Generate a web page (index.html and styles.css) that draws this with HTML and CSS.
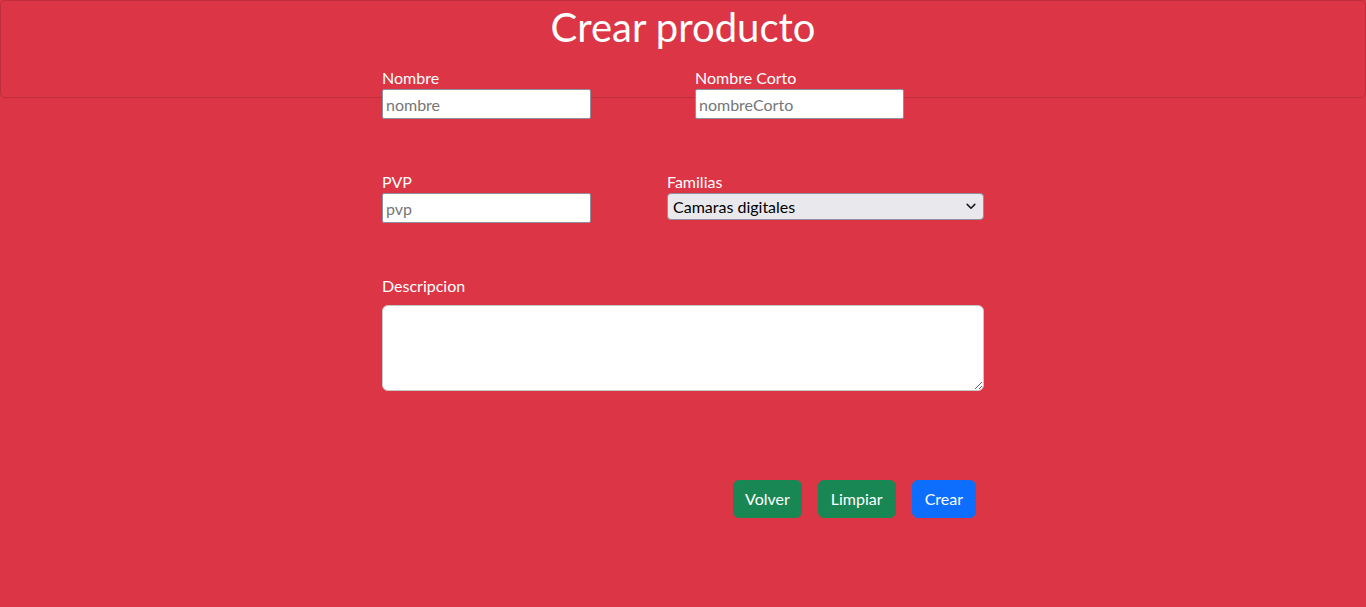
FILE: index.html
```html
<!DOCTYPE html>
<html lang="es">
<head>
<meta charset="utf-8">
<title>Crear producto</title>
<link rel="stylesheet" href="styles.css">
</head>
<body>
<div class="page">
  <div class="banner"></div>
  <h1 class="title">Crear producto</h1>
  <form class="form">
    <div class="row row-1">
      <div class="field">
        <label class="label" for="nombre">Nombre</label>
        <input class="input" id="nombre" type="text" placeholder="nombre">
      </div>
      <div class="field">
        <label class="label" for="nombreCorto">Nombre Corto</label>
        <input class="input" id="nombreCorto" type="text" placeholder="nombreCorto">
      </div>
    </div>
    <div class="row row-2">
      <div class="field">
        <label class="label" for="pvp">PVP</label>
        <input class="input" id="pvp" type="text" placeholder="pvp">
      </div>
      <div class="field field-select">
        <label class="label" for="familia">Familias</label>
        <div class="select-wrap">
          <select class="select" id="familia">
            <option>Camaras digitales</option>
          </select>
          <svg class="chevron" width="10" height="7" viewBox="0 0 10 7"><path d="M1.2 1.4 5 5.2 8.8 1.4" fill="none" stroke="#1b1b1b" stroke-width="1.6" stroke-linecap="round" stroke-linejoin="round"/></svg>
        </div>
      </div>
    </div>
    <div class="row row-3">
      <div class="field field-full">
        <label class="label label-desc" for="descripcion">Descripcion</label>
        <textarea class="textarea" id="descripcion"></textarea>
      </div>
    </div>
    <div class="actions">
      <button type="button" class="btn btn-green btn-volver">Volver</button>
      <button type="reset" class="btn btn-green">Limpiar</button>
      <button type="submit" class="btn btn-blue">Crear</button>
    </div>
  </form>
</div>
</body>
</html>
```

FILE: styles.css
```css
* { box-sizing: border-box; }

html, body {
  margin: 0;
  padding: 0;
  height: 100%;
}

body {
  background: #dc3545;
  color: #ffffff;
  font-family: Lato, "Noto Sans", sans-serif;
  font-size: 16px;
}

.page {
  position: relative;
  min-height: 100%;
  padding-top: 3px;
}

.banner {
  position: absolute;
  top: 0;
  left: 0;
  right: 0;
  height: 98px;
  border: 1px solid rgba(0, 0, 0, 0.13);
  border-radius: 5px;
}

.title {
  position: relative;
  margin: 0;
  font-size: 40px;
  font-weight: 400;
  line-height: 48px;
  text-align: center;
}

.form {
  position: relative;
  width: 602px;
  margin: 14px auto 0;
}

.row {
  display: flex;
  align-items: flex-start;
}

.row-1 { gap: 104px; }
.row-2 { gap: 76px; margin-top: 50px; }
.row-3 { margin-top: 50px; }

.field {
  display: flex;
  flex-direction: column;
}

.field-full { width: 100%; }

.label {
  display: block;
  padding-top: 2px;
  line-height: 22px;
}

.label-desc { margin-bottom: 8px; }

.input {
  width: 209px;
  height: 30px;
  padding: 0 3px;
  border: 1px solid #8f8f9d;
  border-radius: 2px;
  background: #ffffff;
  font-family: inherit;
  font-size: 16px;
  color: #000;
  outline: none;
}

.input::placeholder { color: #767676; }

.select-wrap {
  position: relative;
  width: 317px;
}

.select {
  appearance: none;
  -webkit-appearance: none;
  display: block;
  width: 100%;
  height: 27px;
  padding: 0 24px 0 5px;
  border: 1px solid #8f8f9d;
  border-radius: 4px;
  background: #e9e9ed;
  color: #000;
  font-family: inherit;
  font-size: 16px;
  line-height: 25px;
}

.chevron {
  position: absolute;
  right: 8px;
  top: 10px;
  pointer-events: none;
}

.textarea {
  display: block;
  width: 100%;
  height: 86px;
  border: 1px solid #c8c8cc;
  border-radius: 6px;
  background: #fff;
  font-family: inherit;
  font-size: 16px;
  resize: both;
  outline: none;
}

.actions {
  display: flex;
  justify-content: flex-end;
  gap: 16px;
  margin-top: 89px;
  padding-right: 8px;
}

.btn {
  height: 38px;
  padding: 0 12px;
  border: 1px solid transparent;
  border-radius: 6px;
  color: #fff;
  font-family: inherit;
  font-size: 16px;
  line-height: 24px;
  cursor: pointer;
}

.btn-volver { padding: 0 11px; }

.btn-green { background: #198754; border-color: #198754; }
.btn-blue { background: #0d6efd; border-color: #0d6efd; }
```
